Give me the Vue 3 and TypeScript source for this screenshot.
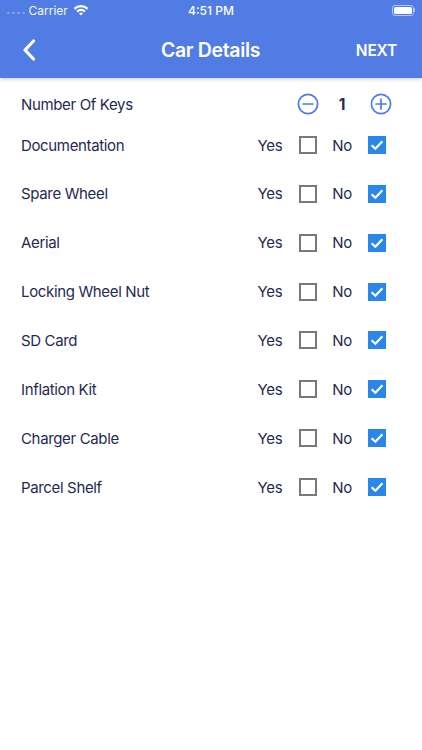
<script setup lang="ts">
const items: string[] = ['Documentation', 'Spare Wheel', 'Aerial', 'Locking Wheel Nut', 'SD Card', 'Inflation Kit', 'Charger Cable', 'Parcel Shelf']
</script>

<template>
  <div class="screen">
    <header class="header">
      <div class="status">
        <div class="status-left">
          <span class="dots"><i></i><i></i><i></i><i></i></span>
          <span class="carrier">Carrier</span>
          <svg class="wifi" width="16" height="12" viewBox="0 0 16 12">
            <path d="M0.6 4 A10.5 10.5 0 0 1 15.4 4 L13.8 5.7 A8.2 8.2 0 0 0 2.2 5.7 Z" fill="#fff" />
            <path d="M3.3 6.7 A6.7 6.7 0 0 1 12.7 6.7 L11.1 8.4 A4.4 4.4 0 0 0 4.9 8.4 Z" fill="#fff" />
            <path d="M6 9.4 A2.9 2.9 0 0 1 10 9.4 L8 11.5 Z" fill="#fff" />
          </svg>
        </div>
        <span class="time">4:51 PM</span>
        <div class="battery-wrap">
          <div class="battery"><span class="battery-fill"></span></div>
          <span class="battery-nub"></span>
        </div>
      </div>
      <div class="nav">
        <svg class="back" width="14" height="22" viewBox="0 0 14 22">
          <path d="M11.5 2 L3 11 L11.5 20" fill="none" stroke="#fff" stroke-width="3.2" stroke-linecap="round" stroke-linejoin="round" />
        </svg>
        <h1 class="title">Car Details</h1>
        <span class="next">NEXT</span>
      </div>
    </header>

    <main class="content">
      <div class="keys-row">
        <span class="label">Number Of Keys</span>
        <div class="stepper">
          <svg width="22" height="22" viewBox="0 0 22 22">
            <circle cx="11" cy="11" r="9.6" fill="none" stroke="#4f7be2" stroke-width="1.7" />
            <path d="M6 11 H16" stroke="#4f7be2" stroke-width="1.7" stroke-linecap="round" />
          </svg>
          <span class="count">1</span>
          <svg width="22" height="22" viewBox="0 0 22 22">
            <circle cx="11" cy="11" r="9.6" fill="none" stroke="#4f7be2" stroke-width="1.7" />
            <path d="M6 11 H16 M11 6 V16" stroke="#4f7be2" stroke-width="1.7" stroke-linecap="round" />
          </svg>
        </div>
      </div>
      <div v-for="item in items" :key="item" class="row">
        <span class="label">{{ item }}</span>
        <div class="choices">
          <span class="opt yes">Yes</span>
          <span class="box"></span>
          <span class="opt no">No</span>
          <span class="box checked">
            <svg width="18" height="18" viewBox="0 0 18 18">
              <path d="M3.6 9.2 L7.4 12.8 L14.4 5.2" fill="none" stroke="#fff" stroke-width="2.2" />
            </svg>
          </span>
        </div>
      </div>
    </main>
  </div>
</template>

<style scoped>
.screen {
  width: 422px;
  height: 750px;
  background: #fff;
  font-family: Inter, "Liberation Sans", sans-serif;
  color: #1f2a52;
  overflow: hidden;
}
.header {
  height: 78px;
  background: #507ce3;
  box-shadow: 0 1px 4px rgba(0, 0, 0, 0.22);
  color: #fff;
  position: relative;
}
.status {
  height: 20px;
  display: grid;
  grid-template-columns: 1fr auto 1fr;
  align-items: center;
  padding: 0 7px 0 7px;
  font-size: 12px;
}
.status-left { display: flex; align-items: center; gap: 4px; }
.dots { display: flex; gap: 2.5px; margin-top: 6px; }
.dots i { width: 2.5px; height: 2.5px; border-radius: 50%; background: rgba(255, 255, 255, 0.3); }
.carrier { opacity: 0.95; }
.wifi { margin-left: 1px; }
.time { font-weight: 500; }
.battery-wrap { justify-self: end; display: flex; align-items: center; }
.battery {
  width: 22px;
  height: 11px;
  border: 1px solid rgba(255, 255, 255, 0.55);
  border-radius: 3px;
  padding: 1px;
  box-sizing: border-box;
}
.battery-fill { display: block; height: 100%; background: #fff; border-radius: 1.5px; }
.battery-nub { width: 1px; height: 4px; background: rgba(255, 255, 255, 0.5); }
.nav {
  height: 58px;
  display: grid;
  grid-template-columns: 1fr auto 1fr;
  align-items: center;
  padding: 2px 23px 0 22px;
  box-sizing: border-box;
}
.title { margin: 0; font-size: 19.5px; font-weight: 600; letter-spacing: -0.35px; }
.next { justify-self: end; margin-right: 2px; font-size: 15.5px; font-weight: 600; letter-spacing: -0.2px; }
.content { padding: 14px 0 0 21px; }
.keys-row, .row {
  display: flex;
  align-items: center;
  justify-content: space-between;
}
.keys-row { height: 24px; padding-right: 30px; margin-bottom: 17px; }
.row { height: 24px; margin-bottom: 24.86px; padding-right: 36px; }
.label { font-size: 15px; letter-spacing: -0.35px; }
.stepper { display: flex; align-items: center; }
.count { width: 51px; padding-right: 5px; box-sizing: border-box; text-align: center; font-weight: 700; font-size: 15.5px; }
.choices { display: flex; align-items: center; }
.opt { font-size: 15px; letter-spacing: -0.3px; }
.yes { margin-right: 17px; }
.no { margin: 0 16px 0 15px; }
.box {
  width: 18px;
  height: 18px;
  border: 2px solid #787878;
  box-sizing: border-box;
  display: block;
}
.box.checked { border: none; background: #2a86e8; }
.box svg { display: block; }
</style>
